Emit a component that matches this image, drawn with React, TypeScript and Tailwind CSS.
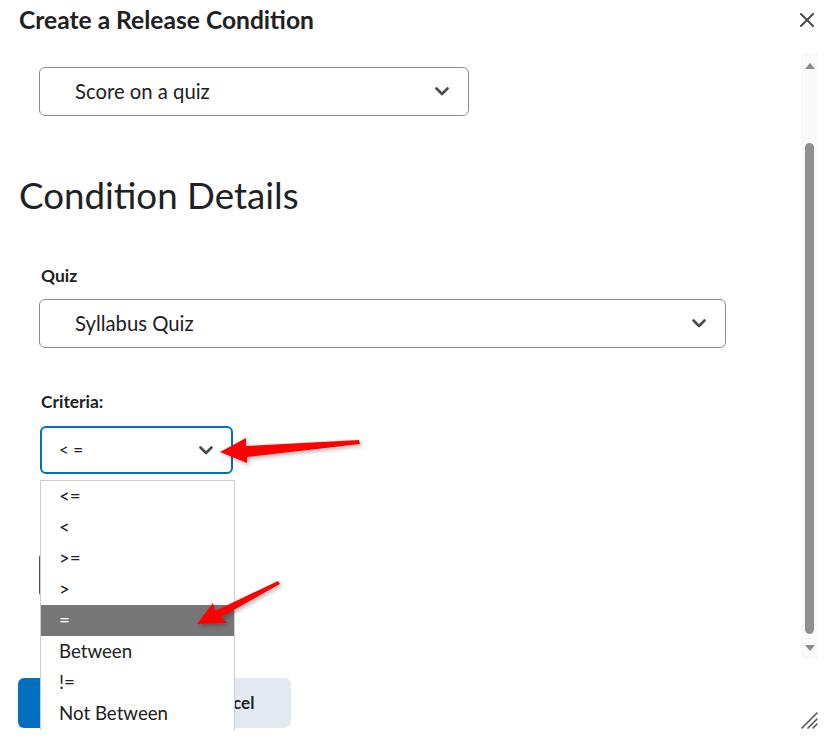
import React from 'react';

const Chevron: React.FC = () => (
  <svg width="14" height="9" viewBox="0 0 14 9" fill="none">
    <polyline points="1.5,1.5 7,7 12.5,1.5" stroke="#494c4e" strokeWidth="2.6" strokeLinecap="round" strokeLinejoin="round" />
  </svg>
);

interface SelectBoxProps {
  value: string;
  className: string;
  textClass?: string;
}

const SelectBox: React.FC<SelectBoxProps> = ({ value, className, textClass }) => (
  <div className={`flex items-center justify-between bg-white rounded-[6px] ${className}`}>
    <span className={textClass ?? 'text-[20.3px] text-[#202122]'}>{value}</span>
    <Chevron />
  </div>
);

const options = ['<=', '<', '>=', '>', '=', 'Between', '!=', 'Not Between'];

export default function App() {
  return (
    <div className="relative w-[833px] h-[748px] overflow-hidden bg-white font-['Lato','Open_Sans',sans-serif] text-[#202122]">
      {/* header */}
      <div className="flex items-center justify-between h-[40px] pl-[19px] pr-[19px] mb-[13px]">
        <h1 className="text-[24.6px] font-bold leading-[30px]">Create a Release Condition</h1>
        <svg width="14" height="14" viewBox="0 0 14 14">
          <path d="M1 1 L13 13 M13 1 L1 13" stroke="#494c4e" strokeWidth="2" strokeLinecap="round" />
        </svg>
      </div>

      {/* scroll body */}
      <div className="flex h-[606px]">
        <div className="flex-1 pl-[19px] pt-[14px] overflow-hidden">
          <div className="pl-[20px]">
            <SelectBox value="Score on a quiz" className="w-[430px] h-[49px] border border-[#8a8d90] pl-[35px] pr-[19px]" />
          </div>

          <h2 className="mt-[59px] text-[36.7px] leading-[40px] font-normal">Condition Details</h2>

          <div className="pl-[22px] mt-[51px] text-[17.4px] font-bold leading-[20px]">Quiz</div>
          <div className="pl-[20px] mt-[13px]">
            <SelectBox value="Syllabus Quiz" className="w-[687px] h-[49px] border border-[#8a8d90] pl-[35px] pr-[19px]" />
          </div>

          <div className="pl-[22px] mt-[44px] text-[17.4px] font-bold leading-[20px]">Criteria:</div>
          <div className="pl-[21px] mt-[14px]">
            <SelectBox
              value="< ="
              className="w-[193px] h-[48px] border-2 border-[#006fbf] pl-[17px] pr-[18px]"
              textClass="text-[17px] text-[#202122]"
            />
          </div>

          <div className="pl-[20px] mt-[78px]">
            <div className="w-[150px] h-[46px] border border-[#494c4e] rounded-[6px]" />
          </div>
        </div>

        {/* scrollbar */}
        <div className="w-[17px] mr-[15px] bg-[#f9f9f9] flex flex-col items-center pt-[10px]">
          <svg width="10" height="6" viewBox="0 0 10 6">
            <path d="M5 0 L10 6 L0 6 Z" fill="#8a8a8a" />
          </svg>
          <div className="mt-[74px] w-[9px] h-[491px] rounded-full bg-[#8f8f8f]" />
          <svg className="mt-[11px]" width="10" height="6" viewBox="0 0 10 6">
            <path d="M0 0 L10 0 L5 6 Z" fill="#8a8a8a" />
          </svg>
        </div>
      </div>

      {/* footer */}
      <div className="flex gap-[12px] pl-[18px] pt-[19px]">
        <button className="h-[50px] w-[137px] rounded-[6px] bg-[#006fbf] text-white text-[17px] font-bold">Create</button>
        <button className="h-[50px] w-[124px] rounded-[6px] bg-[#e3e9f1] text-[#202122] text-[17px] font-bold">Cancel</button>
      </div>

      {/* open listbox */}
      <ul className="absolute left-[40px] top-[480px] w-[195px] h-[250px] bg-white border border-[#cdcdcd] border-b-0">
        {options.map(o => (
          <li
            key={o}
            className={`h-[31px] flex items-center pl-[18px] text-[18.7px] ${o === '=' ? 'bg-[#767676] text-white' : 'text-[#202122]'}`}
          >
            {o}
          </li>
        ))}
      </ul>

      {/* resize grip */}
      <svg className="absolute left-[800px] top-[711px]" width="18" height="18" viewBox="0 0 18 18">
        <path d="M2 17 L17 2 M8 17 L17 8 M13 17 L17 13" stroke="#555" strokeWidth="1.6" strokeLinecap="round" />
      </svg>

      {/* annotation arrows */}
      <svg className="absolute inset-0 pointer-events-none" width="833" height="748" viewBox="0 0 833 748">
        <defs>
          <filter id="sh" x="-20%" y="-50%" width="140%" height="200%">
            <feDropShadow dx="2" dy="2" stdDeviation="2" floodColor="#000" floodOpacity="0.3" />
          </filter>
        </defs>
        <path d="M220 452 L246 438 L246 446 L359 440 L360 444 L247 457 L247 463 Z" fill="#ff0000" filter="url(#sh)" />
        <path d="M197 624 L213 603 L215 611 L278 581 L280 584 L221 617 L227 623 Z" fill="#ff0000" filter="url(#sh)" />
      </svg>
    </div>
  );
}
